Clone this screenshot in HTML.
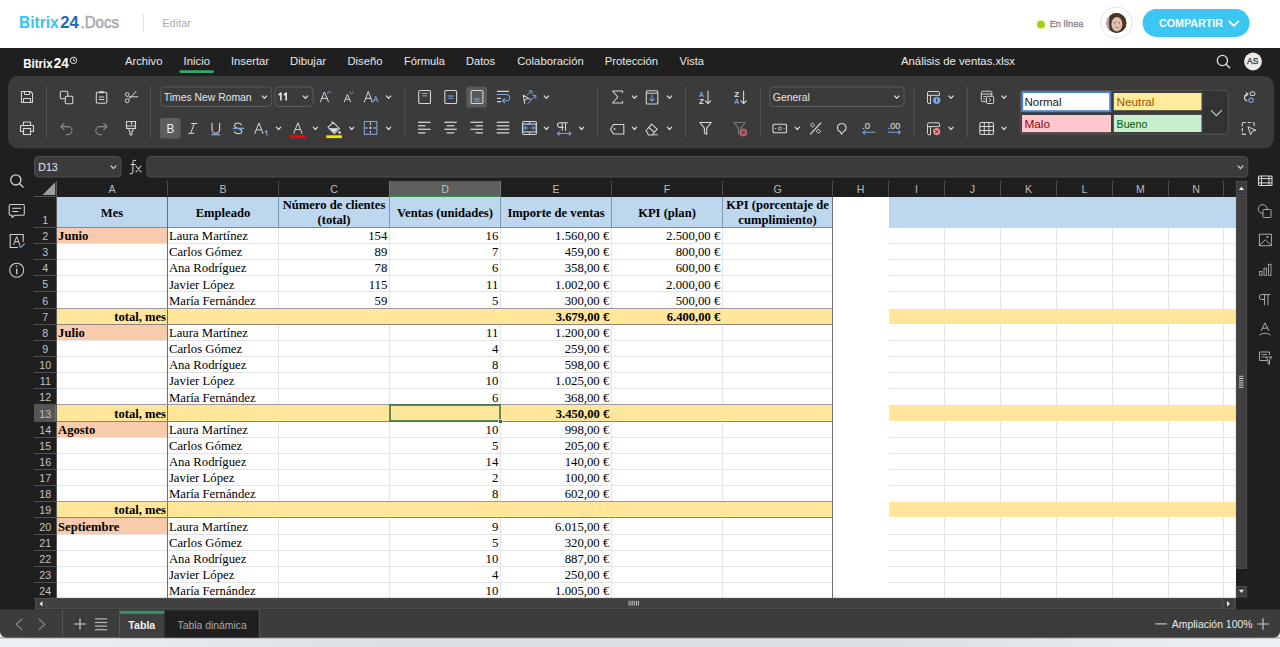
<!DOCTYPE html>
<html><head><meta charset="utf-8"><title>Bitrix24 Docs</title>
<style>html,body{margin:0;padding:0;width:1280px;height:647px;overflow:hidden;background:#1f1f1f;}svg{display:block;}</style>
</head><body>
<svg width="1280" height="647" viewBox="0 0 1280 647" shape-rendering="geometricPrecision">
<rect x="0" y="0" width="1280" height="647" rx="0" fill="#1f1f1f" />
<rect x="0" y="0" width="1280" height="48" rx="0" fill="#ffffff" />
<text x="19.1" y="27.7" font-family="&quot;Liberation Sans&quot;, sans-serif" font-size="17" font-weight="700" fill="#2fc6f6" text-anchor="start" textLength="39.4" lengthAdjust="spacingAndGlyphs" >Bitrix</text>
<text x="60.3" y="27.7" font-family="&quot;Liberation Sans&quot;, sans-serif" font-size="17" font-weight="700" fill="#1a6bb8" text-anchor="start" textLength="18.5" lengthAdjust="spacingAndGlyphs" >24</text>
<text x="80.5" y="27.7" font-family="&quot;Liberation Sans&quot;, sans-serif" font-size="17" font-weight="400" fill="#a3a9b1" text-anchor="start" textLength="38.5" lengthAdjust="spacingAndGlyphs" stroke="#a3a9b1" stroke-width="0.5">.Docs</text>
<line x1="143.5" y1="14" x2="143.5" y2="31.5" stroke="#e3e5e8" stroke-width="1" />
<text x="162.3" y="27.2" font-family="&quot;Liberation Sans&quot;, sans-serif" font-size="10.6" font-weight="400" fill="#a8adb4" text-anchor="start" textLength="28.7" lengthAdjust="spacingAndGlyphs" >Editar</text>
<circle cx="1041" cy="24.5" r="4" fill="#9bd60c"/>
<text x="1049.7" y="27" font-family="&quot;Liberation Sans&quot;, sans-serif" font-size="9.8" font-weight="400" fill="#80858c" text-anchor="start" textLength="33.7" lengthAdjust="spacingAndGlyphs" stroke="#80858c" stroke-width="0.3">En línea</text>
<circle cx="1116.5" cy="22.8" r="15.8" fill="#fff" stroke="#e3e3e3" stroke-width="1"/>
<clipPath id="av"><circle cx="1116.4" cy="23" r="10"/></clipPath>
<g clip-path="url(#av)"><rect x="1105" y="12" width="23" height="22" fill="#5a4238"/><rect x="1105" y="12" width="4.5" height="22" fill="#a9a9a9"/><ellipse cx="1118" cy="22.5" rx="9" ry="11" fill="#4b3428"/><ellipse cx="1116.9" cy="24.2" rx="5.5" ry="7.3" fill="#e0bfac"/><path d="M1111.8 20.5 Q1114 15.5 1119.5 16.5 Q1122 17.5 1122.2 20 L1122.5 17 Q1118 12.5 1111 16.5 Z" fill="#4b3428"/><ellipse cx="1114.8" cy="22.8" rx="1" ry="0.55" fill="#6a4a3e"/><ellipse cx="1119" cy="22.8" rx="1" ry="0.55" fill="#6a4a3e"/><path d="M1115 27.3 Q1117 28.6 1119 27.3" stroke="#b87878" stroke-width="0.9" fill="none"/></g>
<rect x="1142.6" y="9.1" width="107" height="27.8" rx="13.9" fill="#3cc6f3" />
<text x="1159" y="27.1" font-family="&quot;Liberation Sans&quot;, sans-serif" font-size="10.2" font-weight="700" fill="#ffffff" text-anchor="start" textLength="64" lengthAdjust="spacingAndGlyphs" >COMPARTIR</text>
<path d="M1229.3 21.4 L1233.8 25.9 L1238.3 21.4" stroke="#fff" stroke-width="1.9" fill="none" stroke-linecap="round" stroke-linejoin="round"/>
<text x="23.2" y="67.5" font-family="&quot;Liberation Sans&quot;, sans-serif" font-size="13" font-weight="700" fill="#ffffff" text-anchor="start" textLength="29.5" lengthAdjust="spacingAndGlyphs" >Bitrix</text>
<text x="53.8" y="67.5" font-family="&quot;Liberation Sans&quot;, sans-serif" font-size="14" font-weight="700" fill="#ffffff" text-anchor="start" textLength="15" lengthAdjust="spacingAndGlyphs" >24</text>
<circle cx="73.5" cy="60.4" r="3.2" fill="none" stroke="#fff" stroke-width="0.9"/>
<path d="M73.5 58.6 V60.6 H75" stroke="#fff" stroke-width="0.8" fill="none" />
<text x="125" y="65.2" font-family="&quot;Liberation Sans&quot;, sans-serif" font-size="11.3" font-weight="400" fill="#e8e8e8" text-anchor="start" textLength="37.5" lengthAdjust="spacingAndGlyphs" >Archivo</text>
<text x="183.5" y="65.2" font-family="&quot;Liberation Sans&quot;, sans-serif" font-size="11.3" font-weight="400" fill="#e8e8e8" text-anchor="start" textLength="26.5" lengthAdjust="spacingAndGlyphs" >Inicio</text>
<text x="231" y="65.2" font-family="&quot;Liberation Sans&quot;, sans-serif" font-size="11.3" font-weight="400" fill="#e8e8e8" text-anchor="start" textLength="38" lengthAdjust="spacingAndGlyphs" >Insertar</text>
<text x="290" y="65.2" font-family="&quot;Liberation Sans&quot;, sans-serif" font-size="11.3" font-weight="400" fill="#e8e8e8" text-anchor="start" textLength="36" lengthAdjust="spacingAndGlyphs" >Dibujar</text>
<text x="347.5" y="65.2" font-family="&quot;Liberation Sans&quot;, sans-serif" font-size="11.3" font-weight="400" fill="#e8e8e8" text-anchor="start" textLength="35" lengthAdjust="spacingAndGlyphs" >Diseño</text>
<text x="404" y="65.2" font-family="&quot;Liberation Sans&quot;, sans-serif" font-size="11.3" font-weight="400" fill="#e8e8e8" text-anchor="start" textLength="41" lengthAdjust="spacingAndGlyphs" >Fórmula</text>
<text x="466" y="65.2" font-family="&quot;Liberation Sans&quot;, sans-serif" font-size="11.3" font-weight="400" fill="#e8e8e8" text-anchor="start" textLength="29" lengthAdjust="spacingAndGlyphs" >Datos</text>
<text x="517.2" y="65.2" font-family="&quot;Liberation Sans&quot;, sans-serif" font-size="11.3" font-weight="400" fill="#e8e8e8" text-anchor="start" textLength="66.5" lengthAdjust="spacingAndGlyphs" >Colaboración</text>
<text x="604.8" y="65.2" font-family="&quot;Liberation Sans&quot;, sans-serif" font-size="11.3" font-weight="400" fill="#e8e8e8" text-anchor="start" textLength="53.2" lengthAdjust="spacingAndGlyphs" >Protección</text>
<text x="679.5" y="65.2" font-family="&quot;Liberation Sans&quot;, sans-serif" font-size="11.3" font-weight="400" fill="#e8e8e8" text-anchor="start" textLength="24.5" lengthAdjust="spacingAndGlyphs" >Vista</text>
<rect x="179.4" y="70.3" width="34.6" height="2.6" rx="1.3" fill="#3aa46a" />
<text x="901" y="65.2" font-family="&quot;Liberation Sans&quot;, sans-serif" font-size="11.3" font-weight="400" fill="#ececec" text-anchor="start" textLength="114" lengthAdjust="spacingAndGlyphs" >Análisis de ventas.xlsx</text>
<circle cx="1222.4" cy="60.5" r="5.1" fill="none" stroke="#e0e0e0" stroke-width="1.3"/>
<line x1="1226.1" y1="64.2" x2="1229.6" y2="67.7" stroke="#e0e0e0" stroke-width="1.4" stroke-linecap="round"/>
<circle cx="1253" cy="61.5" r="8.9" fill="#ebebeb"/>
<text x="1247" y="64.4" font-family="&quot;Liberation Sans&quot;, sans-serif" font-size="8.6" font-weight="400" fill="#2a2a2a" text-anchor="start" textLength="11.3" lengthAdjust="spacingAndGlyphs" stroke="#2a2a2a" stroke-width="0.25">AS</text>
<rect x="8" y="76" width="1266" height="72.5" rx="10" fill="#3b3b3b" />
<line x1="46.6" y1="86" x2="46.6" y2="138" stroke="#555555" stroke-width="1" />
<line x1="150.5" y1="86" x2="150.5" y2="138" stroke="#555555" stroke-width="1" />
<line x1="404.8" y1="86" x2="404.8" y2="138" stroke="#555555" stroke-width="1" />
<line x1="597.4" y1="86" x2="597.4" y2="138" stroke="#555555" stroke-width="1" />
<line x1="685.5" y1="86" x2="685.5" y2="138" stroke="#555555" stroke-width="1" />
<line x1="760.3" y1="86" x2="760.3" y2="138" stroke="#555555" stroke-width="1" />
<line x1="913.8" y1="86" x2="913.8" y2="138" stroke="#555555" stroke-width="1" />
<line x1="967.3" y1="86" x2="967.3" y2="138" stroke="#555555" stroke-width="1" />
<path d="M21.5 91.5 H30.5 L32.5 93.5 V102.5 H21.5 Z" stroke="#d6d6d6" stroke-width="1.1" fill="none" stroke-linecap="round" stroke-linejoin="round"/>
<path d="M24.5 91.5 V94.5 H29.5 V91.5" stroke="#d6d6d6" stroke-width="1" fill="none" />
<path d="M23.5 102.5 V98.5 H30.5 V102.5" stroke="#d6d6d6" stroke-width="1" fill="none" />
<path d="M23.5 125 V122 H30.5 V125" stroke="#d6d6d6" stroke-width="1.1" fill="none" stroke-linecap="round" stroke-linejoin="round"/>
<path d="M23 131.5 H20.5 V125.5 H33.5 V131.5 H31" stroke="#d6d6d6" stroke-width="1.1" fill="none" stroke-linecap="round" stroke-linejoin="round"/>
<rect x="23.5" y="128.5" width="7" height="6" rx="0" fill="none" stroke="#d6d6d6" stroke-width="1.1" />
<rect x="60.3" y="91.3" width="7.5" height="7.5" rx="1.2" fill="none" stroke="#d6d6d6" stroke-width="1.1" />
<rect x="65.3" y="96.3" width="7.5" height="7.5" rx="1.2" fill="#3b3b3b" stroke="#d6d6d6" stroke-width="1.1" />
<rect x="96.3" y="92.3" width="10.5" height="11" rx="1.5" fill="none" stroke="#d6d6d6" stroke-width="1.1" />
<rect x="99" y="91.2" width="5" height="2" rx="0.8" fill="#d6d6d6" />
<line x1="98.8" y1="97" x2="104.2" y2="97" stroke="#d6d6d6" stroke-width="1" />
<line x1="98.8" y1="99.5" x2="104.2" y2="99.5" stroke="#d6d6d6" stroke-width="1" />
<circle cx="127.2" cy="94.5" r="1.9" fill="none" stroke="#d6d6d6" stroke-width="1"/>
<circle cx="127.2" cy="100.8" r="1.9" fill="none" stroke="#d6d6d6" stroke-width="1"/>
<path d="M128.8 99.3 L136.2 91.2 M129 96.8 H137.8" stroke="#d6d6d6" stroke-width="1" fill="none" stroke-linecap="round" stroke-linejoin="round"/>
<path d="M64 123.5 L60.8 126.6 L64 129.7 M61 126.6 H68 A4 4 0 0 1 68 134.6 H66.5" stroke="#8c8c8c" stroke-width="1.1" fill="none" stroke-linecap="round" stroke-linejoin="round"/>
<path d="M103.8 123.5 L107 126.6 L103.8 129.7 M106.8 126.6 H99.8 A4 4 0 0 0 99.8 134.6 H101.3" stroke="#8c8c8c" stroke-width="1.1" fill="none" stroke-linecap="round" stroke-linejoin="round"/>
<path d="M126.5 121.5 H135.5 V128.5 H126.5 Z" stroke="#d6d6d6" stroke-width="1.1" fill="none" />
<line x1="126.5" y1="126" x2="135.5" y2="126" stroke="#d6d6d6" stroke-width="1" />
<path d="M129 128.5 V131 H130 V135 H132 V131 H133 V128.5" stroke="#d6d6d6" stroke-width="1" fill="none" />
<rect x="131" y="121.5" width="1.2" height="3" rx="0" fill="#d6d6d6" />
<rect x="160.7" y="86.9" width="111" height="19.6" rx="4" fill="none" stroke="#5b5b5b" stroke-width="1" />
<text x="163.8" y="100.5" font-family="&quot;Liberation Sans&quot;, sans-serif" font-size="10.4" font-weight="400" fill="#e6e6e6" text-anchor="start" textLength="87.8" lengthAdjust="spacingAndGlyphs" >Times New Roman</text>
<path d="M262.35 96.0 L264.5 98.4 L266.65 96.0" stroke="#d4d4d4" stroke-width="1.25" fill="none" stroke-linecap="round" stroke-linejoin="round"/>
<rect x="275" y="86.9" width="38" height="19.6" rx="4" fill="none" stroke="#5b5b5b" stroke-width="1" />
<path d="M278.6 95.2 L280.9 93.1 V100.6 M283.9 95.2 L286.2 93.1 V100.6" stroke="#e6e6e6" stroke-width="1.6" fill="none" stroke-linejoin="round"/>
<path d="M303.25 96.0 L305.4 98.4 L307.54999999999995 96.0" stroke="#d4d4d4" stroke-width="1.25" fill="none" stroke-linecap="round" stroke-linejoin="round"/>
<path d="M320.3 101.8 L324.4 92 L328.5 101.8 M321.735 98.37 H327.065" stroke="#d6d6d6" stroke-width="1" fill="none" stroke-linecap="round" stroke-linejoin="round"/>
<path d="M327.3 93.2 L329.1 91.5 L330.9 93.2" stroke="#7ba3dc" stroke-width="1" fill="none" stroke-linecap="round" stroke-linejoin="round"/>
<path d="M344.3 101.8 L347.45000000000005 94.5 L350.6 101.8 M345.40250000000003 99.245 H349.49750000000006" stroke="#d6d6d6" stroke-width="1" fill="none" stroke-linecap="round" stroke-linejoin="round"/>
<path d="M349.6 92 L351.5 93.8 L353.4 92" stroke="#7ba3dc" stroke-width="1" fill="none" stroke-linecap="round" stroke-linejoin="round"/>
<path d="M364.3 102 L368.25 91.5 L372.2 102 M365.6825 98.325 H370.8175" stroke="#d6d6d6" stroke-width="1" fill="none" stroke-linecap="round" stroke-linejoin="round"/>
<path d="M373.4 102 L375.7 96.2 L378 102 M374.2 100 H377.2" stroke="#7ba3dc" stroke-width="1" fill="none" stroke-linecap="round" stroke-linejoin="round"/>
<path d="M386.45000000000005 96.0 L388.6 98.4 L390.75 96.0" stroke="#d4d4d4" stroke-width="1.25" fill="none" stroke-linecap="round" stroke-linejoin="round"/>
<rect x="160" y="118" width="20.7" height="20.6" rx="2.5" fill="#5e5e5e" />
<text x="166.6" y="133.3" font-family="&quot;Liberation Sans&quot;, sans-serif" font-size="13.2" font-weight="400" fill="#f0f0f0" text-anchor="start" textLength="7.8" lengthAdjust="spacingAndGlyphs" >B</text>
<path d="M191.5 123.5 H197 M194.2 123.5 L190.8 133.3 M188.6 133.3 H194" stroke="#d6d6d6" stroke-width="1" fill="none" stroke-linecap="round" stroke-linejoin="round"/>
<path d="M212 123.2 V129.5 A3.8 3.8 0 0 0 219.6 129.5 V123.2" stroke="#d6d6d6" stroke-width="1.1" fill="none" stroke-linecap="round" stroke-linejoin="round"/>
<line x1="211.2" y1="134.6" x2="220.2" y2="134.6" stroke="#7ba3dc" stroke-width="1.5" />
<path d="M241.3 124.8 C240.5 123.5 239.3 123 238 123 C235.8 123 234.6 124.2 234.6 125.7 C234.6 129 241.8 128 241.8 131.3 C241.8 132.8 240.3 133.8 238.2 133.8 C236.6 133.8 235.2 133.2 234.3 131.9" stroke="#d6d6d6" stroke-width="1.1" fill="none" stroke-linecap="round" stroke-linejoin="round"/>
<line x1="232.8" y1="128.4" x2="244" y2="128.4" stroke="#7ba3dc" stroke-width="1.4" />
<path d="M254.8 133.5 L258.9 123 L263 133.5 M256.235 129.825 H261.565" stroke="#d6d6d6" stroke-width="1" fill="none" stroke-linecap="round" stroke-linejoin="round"/>
<path d="M265.2 132 L266.8 130.6 V135.2" stroke="#7ba3dc" stroke-width="1.1" fill="none" stroke-linecap="round" stroke-linejoin="round"/>
<path d="M276.45000000000005 127.10000000000001 L278.6 129.5 L280.75 127.10000000000001" stroke="#d4d4d4" stroke-width="1.25" fill="none" stroke-linecap="round" stroke-linejoin="round"/>
<path d="M293.8 133.2 L297.9 122.8 L302 133.2 M295.235 129.56 H300.565" stroke="#d6d6d6" stroke-width="1" fill="none" stroke-linecap="round" stroke-linejoin="round"/>
<rect x="290" y="135.3" width="15.7" height="2.8" rx="0" fill="#ff0000" />
<path d="M313.25 127.10000000000001 L315.4 129.5 L317.54999999999995 127.10000000000001" stroke="#d4d4d4" stroke-width="1.25" fill="none" stroke-linecap="round" stroke-linejoin="round"/>
<path d="M328 127.3 L333.2 122.3 L339.5 128.6 L334.3 133.6 Z" stroke="#d6d6d6" stroke-width="1.1" fill="none" stroke-linecap="round" stroke-linejoin="round"/>
<path d="M329 128.3 H338.5 L334.3 132.6 Z" stroke="none" stroke-width="1" fill="#e8e8e8" />
<line x1="331.2" y1="121.2" x2="333.3" y2="123.3" stroke="#d6d6d6" stroke-width="1" />
<circle cx="339.6" cy="132.6" r="1.3" fill="#d6d6d6"/>
<rect x="326.3" y="135.3" width="15.7" height="2.8" rx="0" fill="#f5e600" />
<path d="M349.55 127.10000000000001 L351.7 129.5 L353.84999999999997 127.10000000000001" stroke="#d4d4d4" stroke-width="1.25" fill="none" stroke-linecap="round" stroke-linejoin="round"/>
<rect x="364.3" y="121.5" width="12.5" height="12.8" rx="0" fill="none" stroke="#7ba3dc" stroke-width="1.1" />
<path d="M370.5 122.3 V134 M365 128 H376" stroke="#d0d0d0" stroke-width="1.1" fill="none" stroke-dasharray="2.6 1.6"/>
<path d="M386.45000000000005 127.10000000000001 L388.6 129.5 L390.75 127.10000000000001" stroke="#d4d4d4" stroke-width="1.25" fill="none" stroke-linecap="round" stroke-linejoin="round"/>
<rect x="418.7" y="90.5" width="11.8" height="13" rx="1.3" fill="none" stroke="#d6d6d6" stroke-width="1.1" />
<line x1="421.4" y1="93.5" x2="427.79999999999995" y2="93.5" stroke="#7ba3dc" stroke-width="1.1" />
<line x1="422.29999999999995" y1="95.8" x2="426.9" y2="95.8" stroke="#7ba3dc" stroke-width="1.1" />
<rect x="444.8" y="90.5" width="11.8" height="13" rx="1.3" fill="none" stroke="#d6d6d6" stroke-width="1.1" />
<line x1="447.5" y1="96" x2="453.9" y2="96" stroke="#7ba3dc" stroke-width="1.1" />
<line x1="448.4" y1="98.3" x2="453.0" y2="98.3" stroke="#7ba3dc" stroke-width="1.1" />
<rect x="466.2" y="86.4" width="20.8" height="21.1" rx="3" fill="#5a5a5a" />
<rect x="471.1" y="90.5" width="11.8" height="13" rx="1.3" fill="none" stroke="#d6d6d6" stroke-width="1.1" />
<line x1="473.8" y1="99" x2="480.2" y2="99" stroke="#7ba3dc" stroke-width="1.1" />
<line x1="474.7" y1="101.3" x2="479.3" y2="101.3" stroke="#7ba3dc" stroke-width="1.1" />
<path d="M497 91.4 H509 M497 98.3 H501 M497 101.6 H501" stroke="#d6d6d6" stroke-width="1.2" fill="none" />
<path d="M497 94.5 H506.5 A3.15 3.15 0 0 1 506.5 100.8 H502.8" stroke="#7ba3dc" stroke-width="1.1" fill="none" stroke-linecap="round" stroke-linejoin="round"/>
<path d="M504.6 99 L502.6 100.8 L504.6 102.6" stroke="#7ba3dc" stroke-width="1.2" fill="none" stroke-linecap="round" stroke-linejoin="round"/>
<g transform="rotate(-35 525.5 98.5)"><path d="M522 102 L525.5 94.5 L529 102 M523.3 99.5 H527.7" stroke="#d6d6d6" stroke-width="1" fill="none" stroke-linecap="round" stroke-linejoin="round"/></g>
<path d="M527.8 103.6 L535.6 95.6 M532.6 95.3 H535.8 V98.5 M527.3 94.8 L531.6 91 M529.2 90.9 H531.8 V93.5" stroke="#7ba3dc" stroke-width="1" fill="none" stroke-linecap="round" stroke-linejoin="round"/>
<path d="M544.25 96.0 L546.4 98.4 L548.55 96.0" stroke="#d4d4d4" stroke-width="1.25" fill="none" stroke-linecap="round" stroke-linejoin="round"/>
<line x1="418" y1="122.3" x2="430.5" y2="122.3" stroke="#d0d0d0" stroke-width="1.3" />
<line x1="418" y1="125.8" x2="425.5" y2="125.8" stroke="#d0d0d0" stroke-width="1.3" />
<line x1="418" y1="129.3" x2="430.5" y2="129.3" stroke="#d0d0d0" stroke-width="1.3" />
<line x1="418" y1="132.9" x2="425.5" y2="132.9" stroke="#d0d0d0" stroke-width="1.3" />
<line x1="444.3" y1="122.3" x2="456.8" y2="122.3" stroke="#d0d0d0" stroke-width="1.3" />
<line x1="446.8" y1="125.8" x2="454.3" y2="125.8" stroke="#d0d0d0" stroke-width="1.3" />
<line x1="444.3" y1="129.3" x2="456.8" y2="129.3" stroke="#d0d0d0" stroke-width="1.3" />
<line x1="446.8" y1="132.9" x2="454.3" y2="132.9" stroke="#d0d0d0" stroke-width="1.3" />
<line x1="470.5" y1="122.3" x2="483.0" y2="122.3" stroke="#d0d0d0" stroke-width="1.3" />
<line x1="475.5" y1="125.8" x2="483.0" y2="125.8" stroke="#d0d0d0" stroke-width="1.3" />
<line x1="470.5" y1="129.3" x2="483.0" y2="129.3" stroke="#d0d0d0" stroke-width="1.3" />
<line x1="475.5" y1="132.9" x2="483.0" y2="132.9" stroke="#d0d0d0" stroke-width="1.3" />
<line x1="496.7" y1="122.3" x2="509.2" y2="122.3" stroke="#d0d0d0" stroke-width="1.3" />
<line x1="496.7" y1="125.8" x2="509.2" y2="125.8" stroke="#d0d0d0" stroke-width="1.3" />
<line x1="496.7" y1="129.3" x2="509.2" y2="129.3" stroke="#d0d0d0" stroke-width="1.3" />
<line x1="496.7" y1="132.9" x2="509.2" y2="132.9" stroke="#d0d0d0" stroke-width="1.3" />
<rect x="522.5" y="121.5" width="14" height="13" rx="1.5" fill="none" stroke="#d6d6d6" stroke-width="1.1" />
<line x1="522.5" y1="124" x2="536.5" y2="124" stroke="#d6d6d6" stroke-width="1" />
<line x1="522.5" y1="132" x2="536.5" y2="132" stroke="#d6d6d6" stroke-width="1" />
<line x1="529.5" y1="121.5" x2="529.5" y2="124" stroke="#d6d6d6" stroke-width="1" />
<line x1="529.5" y1="132" x2="529.5" y2="134.5" stroke="#d6d6d6" stroke-width="1" />
<rect x="523.2" y="124.6" width="12.6" height="7" rx="0" fill="none" stroke="#7ba3dc" stroke-width="0.9" />
<path d="M524.5 128 H528 M526 126.5 L524.5 128 L526 129.5 M534.5 128 H531 M533 126.5 L534.5 128 L533 129.5" stroke="#7ba3dc" stroke-width="1" fill="none" stroke-linecap="round" stroke-linejoin="round"/>
<path d="M544.25 127.10000000000001 L546.4 129.5 L548.55 127.10000000000001" stroke="#d4d4d4" stroke-width="1.25" fill="none" stroke-linecap="round" stroke-linejoin="round"/>
<path d="M563.2 122.8 H559.8 A2.3 2.3 0 0 0 559.8 127.4 H563.2 M562.2 122.8 V130.2 M565.5 122.8 V130.2 M561 122.8 H567.5" stroke="#d6d6d6" stroke-width="1.1" fill="none" stroke-linecap="round" stroke-linejoin="round"/>
<path d="M557.5 133.5 H571 M559.2 131.8 L557.5 133.5 L559.2 135.2 M569.3 131.8 L571 133.5 L569.3 135.2" stroke="#7ba3dc" stroke-width="1.1" fill="none" stroke-linecap="round" stroke-linejoin="round"/>
<path d="M579.45 127.10000000000001 L581.6 129.5 L583.75 127.10000000000001" stroke="#d4d4d4" stroke-width="1.25" fill="none" stroke-linecap="round" stroke-linejoin="round"/>
<path d="M622.6 92.5 V91 H612.5 L617.8 97 L612.5 103 H622.6 V101.5" stroke="#d6d6d6" stroke-width="1.1" fill="none" stroke-linecap="round" stroke-linejoin="round"/>
<path d="M632.35 96.0 L634.5 98.4 L636.65 96.0" stroke="#d4d4d4" stroke-width="1.25" fill="none" stroke-linecap="round" stroke-linejoin="round"/>
<rect x="646.3" y="90.8" width="11.5" height="13.2" rx="1" fill="none" stroke="#d6d6d6" stroke-width="1.1" />
<line x1="646.3" y1="93.2" x2="657.8" y2="93.2" stroke="#d6d6d6" stroke-width="1" />
<path d="M652 95 V101 M649.6 98.8 L652 101.2 L654.4 98.8" stroke="#7ba3dc" stroke-width="1.1" fill="none" stroke-linecap="round" stroke-linejoin="round"/>
<path d="M667.35 96.0 L669.5 98.4 L671.65 96.0" stroke="#d4d4d4" stroke-width="1.25" fill="none" stroke-linecap="round" stroke-linejoin="round"/>
<path d="M613.5 124.5 H623.8 V134 H613.5 L610.5 129.25 Z" stroke="#d6d6d6" stroke-width="1.1" fill="none" stroke-linecap="round" stroke-linejoin="round"/>
<circle cx="614.5" cy="129" r="0.9" fill="#d6d6d6"/>
<path d="M632.35 127.10000000000001 L634.5 129.5 L636.65 127.10000000000001" stroke="#d4d4d4" stroke-width="1.25" fill="none" stroke-linecap="round" stroke-linejoin="round"/>
<path d="M646 130.5 L651.6 124.2 L657.2 129.2 L652 135 H648.5 Z M649 127.5 L654.2 132.2" stroke="#d6d6d6" stroke-width="1.1" fill="none" stroke-linecap="round" stroke-linejoin="round"/>
<line x1="652" y1="134.8" x2="657.8" y2="134.8" stroke="#d6d6d6" stroke-width="1" />
<path d="M667.35 127.10000000000001 L669.5 129.5 L671.65 127.10000000000001" stroke="#d4d4d4" stroke-width="1.25" fill="none" stroke-linecap="round" stroke-linejoin="round"/>
<text x="699" y="96.5" font-family="&quot;Liberation Sans&quot;, sans-serif" font-size="6.6" font-weight="700" fill="#7ba3dc" text-anchor="start" textLength="5" lengthAdjust="spacingAndGlyphs" >A</text>
<text x="699" y="104" font-family="&quot;Liberation Sans&quot;, sans-serif" font-size="6.6" font-weight="700" fill="#e0e0e0" text-anchor="start" textLength="5" lengthAdjust="spacingAndGlyphs" >Z</text>
<path d="M708 91 V103.5 M705.3 100.8 L708 103.5 L710.7 100.8" stroke="#d6d6d6" stroke-width="1.1" fill="none" stroke-linecap="round" stroke-linejoin="round"/>
<text x="734.2" y="96.5" font-family="&quot;Liberation Sans&quot;, sans-serif" font-size="6.6" font-weight="700" fill="#e0e0e0" text-anchor="start" textLength="5" lengthAdjust="spacingAndGlyphs" >Z</text>
<text x="734.2" y="104" font-family="&quot;Liberation Sans&quot;, sans-serif" font-size="6.6" font-weight="700" fill="#7ba3dc" text-anchor="start" textLength="5" lengthAdjust="spacingAndGlyphs" >A</text>
<path d="M743.6 91 V103.5 M740.9 100.8 L743.6 103.5 L746.3 100.8" stroke="#d6d6d6" stroke-width="1.1" fill="none" stroke-linecap="round" stroke-linejoin="round"/>
<path d="M699.8 122.5 H711.3 L706.7 128.2 V134.2 L704.4 133 V128.2 Z" stroke="#d6d6d6" stroke-width="1.1" fill="none" stroke-linecap="round" stroke-linejoin="round"/>
<path d="M733.8 122.5 H745.3 L740.7 128.2 V134.2 L738.4 133 V128.2 Z" stroke="#7a7a7a" stroke-width="1.1" fill="none" stroke-linecap="round" stroke-linejoin="round"/>
<circle cx="743.3" cy="132.5" r="4" fill="#a8606a"/>
<path d="M741.9 131.1 L744.7 133.9 M744.7 131.1 L741.9 133.9" stroke="#5a2228" stroke-width="1" fill="none" />
<rect x="769.8" y="86.9" width="134.3" height="19.6" rx="4" fill="none" stroke="#5b5b5b" stroke-width="1" />
<text x="772.8" y="100.5" font-family="&quot;Liberation Sans&quot;, sans-serif" font-size="10.4" font-weight="400" fill="#e6e6e6" text-anchor="start" textLength="37" lengthAdjust="spacingAndGlyphs" >General</text>
<path d="M894.65 96.0 L896.8 98.4 L898.9499999999999 96.0" stroke="#d4d4d4" stroke-width="1.25" fill="none" stroke-linecap="round" stroke-linejoin="round"/>
<rect x="773" y="124.3" width="13.5" height="8.5" rx="1" fill="none" stroke="#d6d6d6" stroke-width="1.1" />
<circle cx="779.8" cy="128.5" r="1.5" fill="none" stroke="#d6d6d6" stroke-width="0.9"/>
<circle cx="775.6" cy="128.5" r="0.6" fill="#d6d6d6"/><circle cx="784" cy="128.5" r="0.6" fill="#d6d6d6"/>
<path d="M795.15 127.10000000000001 L797.3 129.5 L799.4499999999999 127.10000000000001" stroke="#d4d4d4" stroke-width="1.25" fill="none" stroke-linecap="round" stroke-linejoin="round"/>
<path d="M810.5 134 L820.8 123" stroke="#d6d6d6" stroke-width="1.1" fill="none" stroke-linecap="round" stroke-linejoin="round"/>
<path d="M812.6 123.2 L814.6 125.2 L812.6 127.2 L810.6 125.2 Z M818.6 129.4 L820.6 131.4 L818.6 133.4 L816.6 131.4 Z" stroke="#d6d6d6" stroke-width="1" fill="none" stroke-linecap="round" stroke-linejoin="round"/>
<path d="M841.5 134.3 L840.3 131.8 A4.3 4.3 0 1 1 843.2 131.8 Z" stroke="#d6d6d6" stroke-width="1.1" fill="none" stroke-linecap="round" stroke-linejoin="round"/>
<text x="862" y="129" font-family="&quot;Liberation Sans&quot;, sans-serif" font-size="8.2" font-weight="400" fill="#e0e0e0" text-anchor="start" textLength="8" lengthAdjust="spacingAndGlyphs" >.0</text>
<path d="M863 132.3 H875 M864.7 130.6 L863 132.3 L864.7 134" stroke="#7ba3dc" stroke-width="1.1" fill="none" stroke-linecap="round" stroke-linejoin="round"/>
<text x="887.8" y="129" font-family="&quot;Liberation Sans&quot;, sans-serif" font-size="8.2" font-weight="400" fill="#e0e0e0" text-anchor="start" textLength="12.5" lengthAdjust="spacingAndGlyphs" >.00</text>
<path d="M888 132.3 H900.3 M898.6 130.6 L900.3 132.3 L898.6 134" stroke="#7ba3dc" stroke-width="1.1" fill="none" stroke-linecap="round" stroke-linejoin="round"/>
<path d="M929 91.5 H938 A1.5 1.5 0 0 1 939.5 93 V95.3 H930.5 V103.5 H929 A1.5 1.5 0 0 1 927.5 102 V93 A1.5 1.5 0 0 1 929 91.5 Z" stroke="#d6d6d6" stroke-width="1" fill="none" />
<line x1="927.5" y1="95.3" x2="931" y2="95.3" stroke="#d6d6d6" stroke-width="1" />
<circle cx="936.7" cy="100.3" r="3.6" fill="#78a7e8"/>
<line x1="936.7" y1="98.3" x2="936.7" y2="102.3" stroke="#1f3f6f" stroke-width="1.1" />
<path d="M929 122.8 H938 A1.5 1.5 0 0 1 939.5 124.3 V126.6 H930.5 V134.8 H929 A1.5 1.5 0 0 1 927.5 133.3 V124.3 A1.5 1.5 0 0 1 929 122.8 Z" stroke="#d6d6d6" stroke-width="1" fill="none" />
<line x1="927.5" y1="126.6" x2="931" y2="126.6" stroke="#d6d6d6" stroke-width="1" />
<circle cx="936.7" cy="131.6" r="3.6" fill="#f08a90"/>
<path d="M935.2 130.1 L938.2 133.1 M938.2 130.1 L935.2 133.1" stroke="#5a2020" stroke-width="1" fill="none" />
<path d="M948.85 96.0 L951 98.4 L953.15 96.0" stroke="#d4d4d4" stroke-width="1.25" fill="none" stroke-linecap="round" stroke-linejoin="round"/>
<path d="M948.85 127.10000000000001 L951 129.5 L953.15 127.10000000000001" stroke="#d4d4d4" stroke-width="1.25" fill="none" stroke-linecap="round" stroke-linejoin="round"/>
<rect x="981.3" y="91.2" width="10.5" height="10.5" rx="1.5" fill="none" stroke="#d6d6d6" stroke-width="1" />
<line x1="981.3" y1="94" x2="991.8" y2="94" stroke="#d6d6d6" stroke-width="1" />
<line x1="983.3" y1="96.5" x2="986.5" y2="96.5" stroke="#d6d6d6" stroke-width="0.9" />
<line x1="983.3" y1="99" x2="985.5" y2="99" stroke="#d6d6d6" stroke-width="0.9" />
<rect x="986.5" y="96.3" width="7.2" height="7.2" rx="1" fill="#3b3b3b" stroke="#d6d6d6" stroke-width="1" />
<path d="M988.8 98.2 L991 99.9 L988.8 101.6" stroke="#d6d6d6" stroke-width="0.9" fill="none" />
<path d="M1001.95 96.0 L1004.1 98.4 L1006.25 96.0" stroke="#d4d4d4" stroke-width="1.25" fill="none" stroke-linecap="round" stroke-linejoin="round"/>
<rect x="979.8" y="122.5" width="13.7" height="12" rx="1.5" fill="none" stroke="#d6d6d6" stroke-width="1.1" />
<path d="M979.8 126.5 H993.5 M979.8 130.5 H993.5 M984.3 122.5 V134.5 M988.9 122.5 V134.5" stroke="#d6d6d6" stroke-width="1" fill="none" />
<path d="M1001.95 127.10000000000001 L1004.1 129.5 L1006.25 127.10000000000001" stroke="#d4d4d4" stroke-width="1.25" fill="none" stroke-linecap="round" stroke-linejoin="round"/>
<rect x="1020.3" y="90.6" width="208" height="43.5" rx="3" fill="none" stroke="#555" stroke-width="1" />
<rect x="1203.4" y="90.6" width="25" height="43.5" rx="0" fill="#333333" />
<path d="M1221.4 90.6 H1225.3 A3 3 0 0 1 1228.3 93.6 V131.1 A3 3 0 0 1 1225.3 134.1 H1203.4" stroke="#555" stroke-width="1" fill="none" />
<rect x="1022.2" y="92.1" width="88" height="19.1" rx="0" fill="#ffffff" stroke="#4a82d8" stroke-width="2" />
<text x="1024.5" y="105.8" font-family="&quot;Liberation Sans&quot;, sans-serif" font-size="11" font-weight="400" fill="#1a1a1a" text-anchor="start" textLength="37" lengthAdjust="spacingAndGlyphs" >Normal</text>
<rect x="1113.8" y="93" width="87.7" height="17.2" rx="0" fill="#ffeb9c" />
<text x="1116.5" y="105.8" font-family="&quot;Liberation Sans&quot;, sans-serif" font-size="11" font-weight="400" fill="#9c5700" text-anchor="start" textLength="38" lengthAdjust="spacingAndGlyphs" >Neutral</text>
<rect x="1022" y="115" width="89" height="17.2" rx="0" fill="#ffc7ce" />
<text x="1024.5" y="127.5" font-family="&quot;Liberation Sans&quot;, sans-serif" font-size="11" font-weight="400" fill="#9c0006" text-anchor="start" textLength="25.5" lengthAdjust="spacingAndGlyphs" >Malo</text>
<rect x="1113.8" y="114.9" width="87.7" height="17.1" rx="0" fill="#c6efce" />
<text x="1116.5" y="127.5" font-family="&quot;Liberation Sans&quot;, sans-serif" font-size="11" font-weight="400" fill="#006100" text-anchor="start" textLength="31" lengthAdjust="spacingAndGlyphs" >Bueno</text>
<path d="M1211.4 110.7 L1216.4 115.7 L1221.4 110.7" stroke="#d0d0d0" stroke-width="1.2" fill="none" stroke-linecap="round" stroke-linejoin="round"/>
<path d="M1247.3 94.2 A3.5 3.5 0 0 0 1246.8 100.9" stroke="#d6d6d6" stroke-width="1.2" fill="none" stroke-linecap="round" stroke-linejoin="round"/>
<path d="M1246.2 92.6 L1248 94.2 L1246.2 95.8" stroke="#d6d6d6" stroke-width="1.1" fill="none" stroke-linecap="round" stroke-linejoin="round"/>
<rect x="1250.2" y="92" width="4.6" height="3.4" rx="0.6" fill="none" stroke="#d6d6d6" stroke-width="1" />
<circle cx="1251.1" cy="100.3" r="2.2" fill="none" stroke="#7ba3dc" stroke-width="1.1"/>
<path d="M1245.5 122.5 H1243.5 A1.3 1.3 0 0 0 1242.3 123.8 V126 M1242.3 128.5 V131 M1242.3 133.2 A1.3 1.3 0 0 0 1243.5 134.4 H1245.5 M1248 122.5 H1250.5 M1253 122.5 A1.3 1.3 0 0 1 1254.2 123.8 V125.5" stroke="#d6d6d6" stroke-width="1.1" fill="none" stroke-linecap="round" stroke-linejoin="round"/>
<path d="M1248.3 126.8 L1256 130.3 L1252.4 131.2 L1250.8 134.5 Z" stroke="#d6d6d6" stroke-width="1" fill="none" stroke-linecap="round" stroke-linejoin="round"/>
<rect x="34.5" y="156.5" width="86.5" height="20.5" rx="4" fill="#3b3b3b" stroke="#4e4e4e" stroke-width="1" />
<text x="38.3" y="170.6" font-family="&quot;Liberation Sans&quot;, sans-serif" font-size="10" font-weight="400" fill="#e8e8e8" text-anchor="start" textLength="19.4" lengthAdjust="spacingAndGlyphs" >D13</text>
<path d="M111.0 165.9 L113.5 168.70000000000002 L116.0 165.9" stroke="#d4d4d4" stroke-width="1.25" fill="none" stroke-linecap="round" stroke-linejoin="round"/>
<path d="M135.6 160.6 Q133 159.2 132.9 162.5 V171.5 Q132.8 174.3 130.2 173.6 M131 164.5 H135.3" stroke="#cfcfcf" stroke-width="1.1" fill="none" stroke-linecap="round" stroke-linejoin="round"/>
<path d="M136 166 L141 172 M141 166 L136 172" stroke="#cfcfcf" stroke-width="1.1" fill="none" stroke-linecap="round" stroke-linejoin="round"/>
<rect x="146.8" y="156.5" width="1101" height="20.5" rx="4" fill="#3b3b3b" stroke="#4e4e4e" stroke-width="1" />
<path d="M1238.0 165.9 L1240.5 168.70000000000002 L1243.0 165.9" stroke="#d4d4d4" stroke-width="1.25" fill="none" stroke-linecap="round" stroke-linejoin="round"/>
<circle cx="15.8" cy="179.9" r="5.1" fill="none" stroke="#cfcfcf" stroke-width="1.3"/>
<line x1="19.4" y1="183.5" x2="23" y2="187" stroke="#cfcfcf" stroke-width="1.4" stroke-linecap="round" stroke-linejoin="round"/>
<path d="M10.5 204.5 H23 A1.3 1.3 0 0 1 24.3 205.8 V214 A1.3 1.3 0 0 1 23 215.3 H14.5 L12 217.5 V215.3 H10.5 A1.3 1.3 0 0 1 9.2 214 V205.8 A1.3 1.3 0 0 1 10.5 204.5 Z" stroke="#cfcfcf" stroke-width="1.1" fill="none" stroke-linecap="round" stroke-linejoin="round"/>
<line x1="12.2" y1="208.3" x2="21.2" y2="208.3" stroke="#cfcfcf" stroke-width="1.1" />
<line x1="12.2" y1="211.5" x2="18.5" y2="211.5" stroke="#cfcfcf" stroke-width="1.1" />
<path d="M17.5 247.5 H10.2 V234.5 H23.2 V241.5" stroke="#cfcfcf" stroke-width="1.1" fill="none" stroke-linecap="round" stroke-linejoin="round"/>
<path d="M13.6 244.6 L16.7 236.6 L19.8 244.6 M14.7 241.8 H18.7" stroke="#cfcfcf" stroke-width="1" fill="none" stroke-linecap="round" stroke-linejoin="round"/>
<path d="M19 245.6 L20.8 247.4 L24.5 243.6" stroke="#7ba3dc" stroke-width="1.2" fill="none" stroke-linecap="round" stroke-linejoin="round"/>
<circle cx="16.7" cy="270.2" r="7" fill="none" stroke="#cfcfcf" stroke-width="1.1"/>
<line x1="16.7" y1="268.5" x2="16.7" y2="274.2" stroke="#cfcfcf" stroke-width="1.3" />
<circle cx="16.7" cy="266.3" r="0.8" fill="#cfcfcf"/>
<rect x="34" y="180" width="1202" height="16" rx="0" fill="#1f1f1f" />
<rect x="389" y="181" width="112" height="15" rx="0" fill="#5e5e5e" />
<line x1="56.5" y1="181" x2="56.5" y2="196" stroke="#4a4a4a" stroke-width="1" />
<text x="112.0" y="192.8" font-family="&quot;Liberation Sans&quot;, sans-serif" font-size="10.6" font-weight="400" fill="#bdbdbd" text-anchor="middle" >A</text>
<line x1="167.5" y1="181" x2="167.5" y2="196" stroke="#4a4a4a" stroke-width="1" />
<text x="223.0" y="192.8" font-family="&quot;Liberation Sans&quot;, sans-serif" font-size="10.6" font-weight="400" fill="#bdbdbd" text-anchor="middle" >B</text>
<line x1="278.5" y1="181" x2="278.5" y2="196" stroke="#4a4a4a" stroke-width="1" />
<text x="334.0" y="192.8" font-family="&quot;Liberation Sans&quot;, sans-serif" font-size="10.6" font-weight="400" fill="#bdbdbd" text-anchor="middle" >C</text>
<line x1="389.5" y1="181" x2="389.5" y2="196" stroke="#777777" stroke-width="1" />
<text x="445.0" y="192.8" font-family="&quot;Liberation Sans&quot;, sans-serif" font-size="10.6" font-weight="400" fill="#bdbdbd" text-anchor="middle" >D</text>
<line x1="500.5" y1="181" x2="500.5" y2="196" stroke="#777777" stroke-width="1" />
<text x="556.0" y="192.8" font-family="&quot;Liberation Sans&quot;, sans-serif" font-size="10.6" font-weight="400" fill="#bdbdbd" text-anchor="middle" >E</text>
<line x1="611.5" y1="181" x2="611.5" y2="196" stroke="#4a4a4a" stroke-width="1" />
<text x="667.0" y="192.8" font-family="&quot;Liberation Sans&quot;, sans-serif" font-size="10.6" font-weight="400" fill="#bdbdbd" text-anchor="middle" >F</text>
<line x1="722.5" y1="181" x2="722.5" y2="196" stroke="#4a4a4a" stroke-width="1" />
<text x="777.5" y="192.8" font-family="&quot;Liberation Sans&quot;, sans-serif" font-size="10.6" font-weight="400" fill="#bdbdbd" text-anchor="middle" >G</text>
<line x1="832.5" y1="181" x2="832.5" y2="196" stroke="#4a4a4a" stroke-width="1" />
<text x="860.5" y="192.8" font-family="&quot;Liberation Sans&quot;, sans-serif" font-size="10.6" font-weight="400" fill="#bdbdbd" text-anchor="middle" >H</text>
<line x1="888.5" y1="181" x2="888.5" y2="196" stroke="#4a4a4a" stroke-width="1" />
<text x="916.5" y="192.8" font-family="&quot;Liberation Sans&quot;, sans-serif" font-size="10.6" font-weight="400" fill="#bdbdbd" text-anchor="middle" >I</text>
<line x1="944.5" y1="181" x2="944.5" y2="196" stroke="#4a4a4a" stroke-width="1" />
<text x="972.5" y="192.8" font-family="&quot;Liberation Sans&quot;, sans-serif" font-size="10.6" font-weight="400" fill="#bdbdbd" text-anchor="middle" >J</text>
<line x1="1000.5" y1="181" x2="1000.5" y2="196" stroke="#4a4a4a" stroke-width="1" />
<text x="1028.5" y="192.8" font-family="&quot;Liberation Sans&quot;, sans-serif" font-size="10.6" font-weight="400" fill="#bdbdbd" text-anchor="middle" >K</text>
<line x1="1056.5" y1="181" x2="1056.5" y2="196" stroke="#4a4a4a" stroke-width="1" />
<text x="1084.5" y="192.8" font-family="&quot;Liberation Sans&quot;, sans-serif" font-size="10.6" font-weight="400" fill="#bdbdbd" text-anchor="middle" >L</text>
<line x1="1112.5" y1="181" x2="1112.5" y2="196" stroke="#4a4a4a" stroke-width="1" />
<text x="1140.5" y="192.8" font-family="&quot;Liberation Sans&quot;, sans-serif" font-size="10.6" font-weight="400" fill="#bdbdbd" text-anchor="middle" >M</text>
<line x1="1168.5" y1="181" x2="1168.5" y2="196" stroke="#4a4a4a" stroke-width="1" />
<text x="1196.0" y="192.8" font-family="&quot;Liberation Sans&quot;, sans-serif" font-size="10.6" font-weight="400" fill="#bdbdbd" text-anchor="middle" >N</text>
<line x1="1223.5" y1="181" x2="1223.5" y2="196" stroke="#4a4a4a" stroke-width="1" />
<path d="M42.5 195 L55.2 182.3 V195 Z" stroke="none" stroke-width="1" fill="#9e9e9e" />
<line x1="34" y1="196.5" x2="57" y2="196.5" stroke="#555" stroke-width="1" />
<line x1="389" y1="196.5" x2="501" y2="196.5" stroke="#3f8a56" stroke-width="1" />
<rect x="57" y="197" width="1179" height="401" rx="0" fill="#ffffff" />
<line x1="57" y1="243.5" x2="832" y2="243.5" stroke="#e4e4e4" stroke-width="1" />
<line x1="57" y1="259.5" x2="832" y2="259.5" stroke="#e4e4e4" stroke-width="1" />
<line x1="57" y1="275.5" x2="832" y2="275.5" stroke="#e4e4e4" stroke-width="1" />
<line x1="57" y1="291.5" x2="832" y2="291.5" stroke="#e4e4e4" stroke-width="1" />
<line x1="57" y1="340.5" x2="832" y2="340.5" stroke="#e4e4e4" stroke-width="1" />
<line x1="57" y1="356.5" x2="832" y2="356.5" stroke="#e4e4e4" stroke-width="1" />
<line x1="57" y1="372.5" x2="832" y2="372.5" stroke="#e4e4e4" stroke-width="1" />
<line x1="57" y1="388.5" x2="832" y2="388.5" stroke="#e4e4e4" stroke-width="1" />
<line x1="57" y1="437.5" x2="832" y2="437.5" stroke="#e4e4e4" stroke-width="1" />
<line x1="57" y1="453.5" x2="832" y2="453.5" stroke="#e4e4e4" stroke-width="1" />
<line x1="57" y1="469.5" x2="832" y2="469.5" stroke="#e4e4e4" stroke-width="1" />
<line x1="57" y1="485.5" x2="832" y2="485.5" stroke="#e4e4e4" stroke-width="1" />
<line x1="57" y1="534.5" x2="832" y2="534.5" stroke="#e4e4e4" stroke-width="1" />
<line x1="57" y1="550.5" x2="832" y2="550.5" stroke="#e4e4e4" stroke-width="1" />
<line x1="57" y1="566.5" x2="832" y2="566.5" stroke="#e4e4e4" stroke-width="1" />
<line x1="57" y1="582.5" x2="832" y2="582.5" stroke="#e4e4e4" stroke-width="1" />
<line x1="57" y1="598.5" x2="832" y2="598.5" stroke="#e4e4e4" stroke-width="1" />
<line x1="889" y1="227.5" x2="1236" y2="227.5" stroke="#e4e4e4" stroke-width="1" />
<line x1="889" y1="243.5" x2="1236" y2="243.5" stroke="#e4e4e4" stroke-width="1" />
<line x1="889" y1="259.5" x2="1236" y2="259.5" stroke="#e4e4e4" stroke-width="1" />
<line x1="889" y1="275.5" x2="1236" y2="275.5" stroke="#e4e4e4" stroke-width="1" />
<line x1="889" y1="291.5" x2="1236" y2="291.5" stroke="#e4e4e4" stroke-width="1" />
<line x1="889" y1="340.5" x2="1236" y2="340.5" stroke="#e4e4e4" stroke-width="1" />
<line x1="889" y1="356.5" x2="1236" y2="356.5" stroke="#e4e4e4" stroke-width="1" />
<line x1="889" y1="372.5" x2="1236" y2="372.5" stroke="#e4e4e4" stroke-width="1" />
<line x1="889" y1="388.5" x2="1236" y2="388.5" stroke="#e4e4e4" stroke-width="1" />
<line x1="889" y1="437.5" x2="1236" y2="437.5" stroke="#e4e4e4" stroke-width="1" />
<line x1="889" y1="453.5" x2="1236" y2="453.5" stroke="#e4e4e4" stroke-width="1" />
<line x1="889" y1="469.5" x2="1236" y2="469.5" stroke="#e4e4e4" stroke-width="1" />
<line x1="889" y1="485.5" x2="1236" y2="485.5" stroke="#e4e4e4" stroke-width="1" />
<line x1="889" y1="534.5" x2="1236" y2="534.5" stroke="#e4e4e4" stroke-width="1" />
<line x1="889" y1="550.5" x2="1236" y2="550.5" stroke="#e4e4e4" stroke-width="1" />
<line x1="889" y1="566.5" x2="1236" y2="566.5" stroke="#e4e4e4" stroke-width="1" />
<line x1="889" y1="582.5" x2="1236" y2="582.5" stroke="#e4e4e4" stroke-width="1" />
<line x1="889" y1="598.5" x2="1236" y2="598.5" stroke="#e4e4e4" stroke-width="1" />
<line x1="278.5" y1="228" x2="278.5" y2="598" stroke="#e4e4e4" stroke-width="1" />
<line x1="389.5" y1="228" x2="389.5" y2="598" stroke="#e4e4e4" stroke-width="1" />
<line x1="500.5" y1="228" x2="500.5" y2="598" stroke="#e4e4e4" stroke-width="1" />
<line x1="611.5" y1="228" x2="611.5" y2="598" stroke="#e4e4e4" stroke-width="1" />
<line x1="722.5" y1="228" x2="722.5" y2="598" stroke="#e4e4e4" stroke-width="1" />
<line x1="944.5" y1="228" x2="944.5" y2="598" stroke="#e4e4e4" stroke-width="1" />
<line x1="1000.5" y1="228" x2="1000.5" y2="598" stroke="#e4e4e4" stroke-width="1" />
<line x1="1056.5" y1="228" x2="1056.5" y2="598" stroke="#e4e4e4" stroke-width="1" />
<line x1="1112.5" y1="228" x2="1112.5" y2="598" stroke="#e4e4e4" stroke-width="1" />
<line x1="1168.5" y1="228" x2="1168.5" y2="598" stroke="#e4e4e4" stroke-width="1" />
<line x1="1223.5" y1="228" x2="1223.5" y2="598" stroke="#e4e4e4" stroke-width="1" />
<rect x="57" y="197" width="775" height="30" rx="0" fill="#bdd7ee" />
<rect x="889" y="197" width="347" height="31" rx="0" fill="#bdd7ee" />
<rect x="57" y="308" width="775" height="16" rx="0" fill="#ffe699" />
<rect x="889" y="309" width="347" height="15" rx="0" fill="#ffe699" />
<rect x="57" y="404" width="775" height="17" rx="0" fill="#ffe699" />
<rect x="889" y="405" width="347" height="16" rx="0" fill="#ffe699" />
<rect x="57" y="501" width="775" height="16" rx="0" fill="#ffe699" />
<rect x="889" y="502" width="347" height="15" rx="0" fill="#ffe699" />
<rect x="57" y="228" width="110" height="15" rx="0" fill="#f8cbad" />
<rect x="57" y="325" width="110" height="15" rx="0" fill="#f8cbad" />
<rect x="57" y="422" width="110" height="15" rx="0" fill="#f8cbad" />
<rect x="57" y="518" width="110" height="16" rx="0" fill="#f8cbad" />
<line x1="167.5" y1="197" x2="167.5" y2="227" stroke="#8497b0" stroke-width="1" />
<line x1="278.5" y1="197" x2="278.5" y2="227" stroke="#8497b0" stroke-width="1" />
<line x1="389.5" y1="197" x2="389.5" y2="227" stroke="#8497b0" stroke-width="1" />
<line x1="500.5" y1="197" x2="500.5" y2="227" stroke="#8497b0" stroke-width="1" />
<line x1="611.5" y1="197" x2="611.5" y2="227" stroke="#8497b0" stroke-width="1" />
<line x1="722.5" y1="197" x2="722.5" y2="227" stroke="#8497b0" stroke-width="1" />
<line x1="57" y1="227.5" x2="832" y2="227.5" stroke="#7f8a96" stroke-width="1" />
<line x1="167.5" y1="197" x2="167.5" y2="598" stroke="#707070" stroke-width="1" />
<line x1="832.5" y1="197" x2="832.5" y2="598" stroke="#707070" stroke-width="1" />
<line x1="57" y1="308.5" x2="832" y2="308.5" stroke="#9a9a9a" stroke-width="1" />
<line x1="57" y1="324.5" x2="832" y2="324.5" stroke="#8c8378" stroke-width="1" />
<line x1="57" y1="404.5" x2="832" y2="404.5" stroke="#9a9a9a" stroke-width="1" />
<line x1="57" y1="421.5" x2="832" y2="421.5" stroke="#8c8378" stroke-width="1" />
<line x1="57" y1="501.5" x2="832" y2="501.5" stroke="#9a9a9a" stroke-width="1" />
<line x1="57" y1="517.5" x2="832" y2="517.5" stroke="#8c8378" stroke-width="1" />
<text x="112.0" y="216.8" font-family="&quot;Liberation Serif&quot;, serif" font-size="12.6" font-weight="700" fill="#000" text-anchor="middle" >Mes</text>
<text x="223.0" y="216.8" font-family="&quot;Liberation Serif&quot;, serif" font-size="12.6" font-weight="700" fill="#000" text-anchor="middle" >Empleado</text>
<text x="334.0" y="209" font-family="&quot;Liberation Serif&quot;, serif" font-size="12.6" font-weight="700" fill="#000" text-anchor="middle" >Número de clientes</text>
<text x="334.0" y="223.6" font-family="&quot;Liberation Serif&quot;, serif" font-size="12.6" font-weight="700" fill="#000" text-anchor="middle" >(total)</text>
<text x="445.0" y="216.8" font-family="&quot;Liberation Serif&quot;, serif" font-size="12.6" font-weight="700" fill="#000" text-anchor="middle" >Ventas (unidades)</text>
<text x="556.0" y="216.8" font-family="&quot;Liberation Serif&quot;, serif" font-size="12.6" font-weight="700" fill="#000" text-anchor="middle" >Importe de ventas</text>
<text x="667.0" y="216.8" font-family="&quot;Liberation Serif&quot;, serif" font-size="12.6" font-weight="700" fill="#000" text-anchor="middle" >KPI (plan)</text>
<text x="777.5" y="209" font-family="&quot;Liberation Serif&quot;, serif" font-size="12.6" font-weight="700" fill="#000" text-anchor="middle" >KPI (porcentaje de</text>
<text x="777.5" y="223.6" font-family="&quot;Liberation Serif&quot;, serif" font-size="12.6" font-weight="700" fill="#000" text-anchor="middle" >cumplimiento)</text>
<text x="58.1" y="240.1" font-family="&quot;Liberation Serif&quot;, serif" font-size="12.6" font-weight="700" fill="#000" text-anchor="start" >Junio</text>
<text x="168.9" y="240.1" font-family="&quot;Liberation Serif&quot;, serif" font-size="12.75" font-weight="400" fill="#000" text-anchor="start" >Laura Martínez</text>
<text x="387.3" y="240.1" font-family="&quot;Liberation Serif&quot;, serif" font-size="12.75" font-weight="400" fill="#000" text-anchor="end" >154</text>
<text x="498.3" y="240.1" font-family="&quot;Liberation Serif&quot;, serif" font-size="12.75" font-weight="400" fill="#000" text-anchor="end" >16</text>
<text x="609.3" y="240.1" font-family="&quot;Liberation Serif&quot;, serif" font-size="12.75" font-weight="400" fill="#000" text-anchor="end" >1.560,00 €</text>
<text x="720.3" y="240.1" font-family="&quot;Liberation Serif&quot;, serif" font-size="12.75" font-weight="400" fill="#000" text-anchor="end" >2.500,00 €</text>
<text x="168.9" y="256.24" font-family="&quot;Liberation Serif&quot;, serif" font-size="12.75" font-weight="400" fill="#000" text-anchor="start" >Carlos Gómez</text>
<text x="387.3" y="256.24" font-family="&quot;Liberation Serif&quot;, serif" font-size="12.75" font-weight="400" fill="#000" text-anchor="end" >89</text>
<text x="498.3" y="256.24" font-family="&quot;Liberation Serif&quot;, serif" font-size="12.75" font-weight="400" fill="#000" text-anchor="end" >7</text>
<text x="609.3" y="256.24" font-family="&quot;Liberation Serif&quot;, serif" font-size="12.75" font-weight="400" fill="#000" text-anchor="end" >459,00 €</text>
<text x="720.3" y="256.24" font-family="&quot;Liberation Serif&quot;, serif" font-size="12.75" font-weight="400" fill="#000" text-anchor="end" >800,00 €</text>
<text x="168.9" y="272.38" font-family="&quot;Liberation Serif&quot;, serif" font-size="12.75" font-weight="400" fill="#000" text-anchor="start" >Ana Rodríguez</text>
<text x="387.3" y="272.38" font-family="&quot;Liberation Serif&quot;, serif" font-size="12.75" font-weight="400" fill="#000" text-anchor="end" >78</text>
<text x="498.3" y="272.38" font-family="&quot;Liberation Serif&quot;, serif" font-size="12.75" font-weight="400" fill="#000" text-anchor="end" >6</text>
<text x="609.3" y="272.38" font-family="&quot;Liberation Serif&quot;, serif" font-size="12.75" font-weight="400" fill="#000" text-anchor="end" >358,00 €</text>
<text x="720.3" y="272.38" font-family="&quot;Liberation Serif&quot;, serif" font-size="12.75" font-weight="400" fill="#000" text-anchor="end" >600,00 €</text>
<text x="168.9" y="288.52" font-family="&quot;Liberation Serif&quot;, serif" font-size="12.75" font-weight="400" fill="#000" text-anchor="start" >Javier López</text>
<text x="387.3" y="288.52" font-family="&quot;Liberation Serif&quot;, serif" font-size="12.75" font-weight="400" fill="#000" text-anchor="end" >115</text>
<text x="498.3" y="288.52" font-family="&quot;Liberation Serif&quot;, serif" font-size="12.75" font-weight="400" fill="#000" text-anchor="end" >11</text>
<text x="609.3" y="288.52" font-family="&quot;Liberation Serif&quot;, serif" font-size="12.75" font-weight="400" fill="#000" text-anchor="end" >1.002,00 €</text>
<text x="720.3" y="288.52" font-family="&quot;Liberation Serif&quot;, serif" font-size="12.75" font-weight="400" fill="#000" text-anchor="end" >2.000,00 €</text>
<text x="168.9" y="304.66" font-family="&quot;Liberation Serif&quot;, serif" font-size="12.75" font-weight="400" fill="#000" text-anchor="start" >María Fernández</text>
<text x="387.3" y="304.66" font-family="&quot;Liberation Serif&quot;, serif" font-size="12.75" font-weight="400" fill="#000" text-anchor="end" >59</text>
<text x="498.3" y="304.66" font-family="&quot;Liberation Serif&quot;, serif" font-size="12.75" font-weight="400" fill="#000" text-anchor="end" >5</text>
<text x="609.3" y="304.66" font-family="&quot;Liberation Serif&quot;, serif" font-size="12.75" font-weight="400" fill="#000" text-anchor="end" >300,00 €</text>
<text x="720.3" y="304.66" font-family="&quot;Liberation Serif&quot;, serif" font-size="12.75" font-weight="400" fill="#000" text-anchor="end" >500,00 €</text>
<text x="58.1" y="336.94" font-family="&quot;Liberation Serif&quot;, serif" font-size="12.6" font-weight="700" fill="#000" text-anchor="start" >Julio</text>
<text x="168.9" y="336.94" font-family="&quot;Liberation Serif&quot;, serif" font-size="12.75" font-weight="400" fill="#000" text-anchor="start" >Laura Martínez</text>
<text x="498.3" y="336.94" font-family="&quot;Liberation Serif&quot;, serif" font-size="12.75" font-weight="400" fill="#000" text-anchor="end" >11</text>
<text x="609.3" y="336.94" font-family="&quot;Liberation Serif&quot;, serif" font-size="12.75" font-weight="400" fill="#000" text-anchor="end" >1.200,00 €</text>
<text x="168.9" y="353.08" font-family="&quot;Liberation Serif&quot;, serif" font-size="12.75" font-weight="400" fill="#000" text-anchor="start" >Carlos Gómez</text>
<text x="498.3" y="353.08" font-family="&quot;Liberation Serif&quot;, serif" font-size="12.75" font-weight="400" fill="#000" text-anchor="end" >4</text>
<text x="609.3" y="353.08" font-family="&quot;Liberation Serif&quot;, serif" font-size="12.75" font-weight="400" fill="#000" text-anchor="end" >259,00 €</text>
<text x="168.9" y="369.21999999999997" font-family="&quot;Liberation Serif&quot;, serif" font-size="12.75" font-weight="400" fill="#000" text-anchor="start" >Ana Rodríguez</text>
<text x="498.3" y="369.21999999999997" font-family="&quot;Liberation Serif&quot;, serif" font-size="12.75" font-weight="400" fill="#000" text-anchor="end" >8</text>
<text x="609.3" y="369.21999999999997" font-family="&quot;Liberation Serif&quot;, serif" font-size="12.75" font-weight="400" fill="#000" text-anchor="end" >598,00 €</text>
<text x="168.9" y="385.35999999999996" font-family="&quot;Liberation Serif&quot;, serif" font-size="12.75" font-weight="400" fill="#000" text-anchor="start" >Javier López</text>
<text x="498.3" y="385.35999999999996" font-family="&quot;Liberation Serif&quot;, serif" font-size="12.75" font-weight="400" fill="#000" text-anchor="end" >10</text>
<text x="609.3" y="385.35999999999996" font-family="&quot;Liberation Serif&quot;, serif" font-size="12.75" font-weight="400" fill="#000" text-anchor="end" >1.025,00 €</text>
<text x="168.9" y="401.5" font-family="&quot;Liberation Serif&quot;, serif" font-size="12.75" font-weight="400" fill="#000" text-anchor="start" >María Fernández</text>
<text x="498.3" y="401.5" font-family="&quot;Liberation Serif&quot;, serif" font-size="12.75" font-weight="400" fill="#000" text-anchor="end" >6</text>
<text x="609.3" y="401.5" font-family="&quot;Liberation Serif&quot;, serif" font-size="12.75" font-weight="400" fill="#000" text-anchor="end" >368,00 €</text>
<text x="58.1" y="433.78000000000003" font-family="&quot;Liberation Serif&quot;, serif" font-size="12.6" font-weight="700" fill="#000" text-anchor="start" >Agosto</text>
<text x="168.9" y="433.78000000000003" font-family="&quot;Liberation Serif&quot;, serif" font-size="12.75" font-weight="400" fill="#000" text-anchor="start" >Laura Martínez</text>
<text x="498.3" y="433.78000000000003" font-family="&quot;Liberation Serif&quot;, serif" font-size="12.75" font-weight="400" fill="#000" text-anchor="end" >10</text>
<text x="609.3" y="433.78000000000003" font-family="&quot;Liberation Serif&quot;, serif" font-size="12.75" font-weight="400" fill="#000" text-anchor="end" >998,00 €</text>
<text x="168.9" y="449.92" font-family="&quot;Liberation Serif&quot;, serif" font-size="12.75" font-weight="400" fill="#000" text-anchor="start" >Carlos Gómez</text>
<text x="498.3" y="449.92" font-family="&quot;Liberation Serif&quot;, serif" font-size="12.75" font-weight="400" fill="#000" text-anchor="end" >5</text>
<text x="609.3" y="449.92" font-family="&quot;Liberation Serif&quot;, serif" font-size="12.75" font-weight="400" fill="#000" text-anchor="end" >205,00 €</text>
<text x="168.9" y="466.06" font-family="&quot;Liberation Serif&quot;, serif" font-size="12.75" font-weight="400" fill="#000" text-anchor="start" >Ana Rodríguez</text>
<text x="498.3" y="466.06" font-family="&quot;Liberation Serif&quot;, serif" font-size="12.75" font-weight="400" fill="#000" text-anchor="end" >14</text>
<text x="609.3" y="466.06" font-family="&quot;Liberation Serif&quot;, serif" font-size="12.75" font-weight="400" fill="#000" text-anchor="end" >140,00 €</text>
<text x="168.9" y="482.2" font-family="&quot;Liberation Serif&quot;, serif" font-size="12.75" font-weight="400" fill="#000" text-anchor="start" >Javier López</text>
<text x="498.3" y="482.2" font-family="&quot;Liberation Serif&quot;, serif" font-size="12.75" font-weight="400" fill="#000" text-anchor="end" >2</text>
<text x="609.3" y="482.2" font-family="&quot;Liberation Serif&quot;, serif" font-size="12.75" font-weight="400" fill="#000" text-anchor="end" >100,00 €</text>
<text x="168.9" y="498.34" font-family="&quot;Liberation Serif&quot;, serif" font-size="12.75" font-weight="400" fill="#000" text-anchor="start" >María Fernández</text>
<text x="498.3" y="498.34" font-family="&quot;Liberation Serif&quot;, serif" font-size="12.75" font-weight="400" fill="#000" text-anchor="end" >8</text>
<text x="609.3" y="498.34" font-family="&quot;Liberation Serif&quot;, serif" font-size="12.75" font-weight="400" fill="#000" text-anchor="end" >602,00 €</text>
<text x="58.1" y="530.62" font-family="&quot;Liberation Serif&quot;, serif" font-size="12.6" font-weight="700" fill="#000" text-anchor="start" >Septiembre</text>
<text x="168.9" y="530.62" font-family="&quot;Liberation Serif&quot;, serif" font-size="12.75" font-weight="400" fill="#000" text-anchor="start" >Laura Martínez</text>
<text x="498.3" y="530.62" font-family="&quot;Liberation Serif&quot;, serif" font-size="12.75" font-weight="400" fill="#000" text-anchor="end" >9</text>
<text x="609.3" y="530.62" font-family="&quot;Liberation Serif&quot;, serif" font-size="12.75" font-weight="400" fill="#000" text-anchor="end" >6.015,00 €</text>
<text x="168.9" y="546.7600000000001" font-family="&quot;Liberation Serif&quot;, serif" font-size="12.75" font-weight="400" fill="#000" text-anchor="start" >Carlos Gómez</text>
<text x="498.3" y="546.7600000000001" font-family="&quot;Liberation Serif&quot;, serif" font-size="12.75" font-weight="400" fill="#000" text-anchor="end" >5</text>
<text x="609.3" y="546.7600000000001" font-family="&quot;Liberation Serif&quot;, serif" font-size="12.75" font-weight="400" fill="#000" text-anchor="end" >320,00 €</text>
<text x="168.9" y="562.9000000000001" font-family="&quot;Liberation Serif&quot;, serif" font-size="12.75" font-weight="400" fill="#000" text-anchor="start" >Ana Rodríguez</text>
<text x="498.3" y="562.9000000000001" font-family="&quot;Liberation Serif&quot;, serif" font-size="12.75" font-weight="400" fill="#000" text-anchor="end" >10</text>
<text x="609.3" y="562.9000000000001" font-family="&quot;Liberation Serif&quot;, serif" font-size="12.75" font-weight="400" fill="#000" text-anchor="end" >887,00 €</text>
<text x="168.9" y="579.0400000000001" font-family="&quot;Liberation Serif&quot;, serif" font-size="12.75" font-weight="400" fill="#000" text-anchor="start" >Javier López</text>
<text x="498.3" y="579.0400000000001" font-family="&quot;Liberation Serif&quot;, serif" font-size="12.75" font-weight="400" fill="#000" text-anchor="end" >4</text>
<text x="609.3" y="579.0400000000001" font-family="&quot;Liberation Serif&quot;, serif" font-size="12.75" font-weight="400" fill="#000" text-anchor="end" >250,00 €</text>
<text x="168.9" y="595.1800000000001" font-family="&quot;Liberation Serif&quot;, serif" font-size="12.75" font-weight="400" fill="#000" text-anchor="start" >María Fernández</text>
<text x="498.3" y="595.1800000000001" font-family="&quot;Liberation Serif&quot;, serif" font-size="12.75" font-weight="400" fill="#000" text-anchor="end" >10</text>
<text x="609.3" y="595.1800000000001" font-family="&quot;Liberation Serif&quot;, serif" font-size="12.75" font-weight="400" fill="#000" text-anchor="end" >1.005,00 €</text>
<text x="166" y="320.8" font-family="&quot;Liberation Serif&quot;, serif" font-size="12.6" font-weight="700" fill="#000" text-anchor="end" >total, mes</text>
<text x="609.3" y="320.8" font-family="&quot;Liberation Serif&quot;, serif" font-size="12.6" font-weight="700" fill="#000" text-anchor="end" >3.679,00 €</text>
<text x="720.3" y="320.8" font-family="&quot;Liberation Serif&quot;, serif" font-size="12.6" font-weight="700" fill="#000" text-anchor="end" >6.400,00 €</text>
<text x="166" y="417.64000000000004" font-family="&quot;Liberation Serif&quot;, serif" font-size="12.6" font-weight="700" fill="#000" text-anchor="end" >total, mes</text>
<text x="609.3" y="417.64000000000004" font-family="&quot;Liberation Serif&quot;, serif" font-size="12.6" font-weight="700" fill="#000" text-anchor="end" >3.450,00 €</text>
<text x="166" y="514.48" font-family="&quot;Liberation Serif&quot;, serif" font-size="12.6" font-weight="700" fill="#000" text-anchor="end" >total, mes</text>
<rect x="390" y="405" width="110" height="16" rx="0" fill="none" stroke="#2f6b44" stroke-width="1.5" />
<rect x="498.5" y="419.5" width="4" height="4" rx="0" fill="#2f6b44" stroke="#fff" stroke-width="0.8" />
<rect x="34" y="197" width="22" height="401" rx="0" fill="#1f1f1f" />
<line x1="34" y1="227.5" x2="56" y2="227.5" stroke="#505050" stroke-width="1" />
<text x="45.3" y="224.1" font-family="&quot;Liberation Sans&quot;, sans-serif" font-size="10.7" font-weight="400" fill="#c4c4c4" text-anchor="middle" >1</text>
<line x1="34" y1="243.5" x2="56" y2="243.5" stroke="#505050" stroke-width="1" />
<text x="45.3" y="240.1" font-family="&quot;Liberation Sans&quot;, sans-serif" font-size="10.7" font-weight="400" fill="#c4c4c4" text-anchor="middle" >2</text>
<line x1="34" y1="259.5" x2="56" y2="259.5" stroke="#505050" stroke-width="1" />
<text x="45.3" y="256.1" font-family="&quot;Liberation Sans&quot;, sans-serif" font-size="10.7" font-weight="400" fill="#c4c4c4" text-anchor="middle" >3</text>
<line x1="34" y1="275.5" x2="56" y2="275.5" stroke="#505050" stroke-width="1" />
<text x="45.3" y="272.1" font-family="&quot;Liberation Sans&quot;, sans-serif" font-size="10.7" font-weight="400" fill="#c4c4c4" text-anchor="middle" >4</text>
<line x1="34" y1="291.5" x2="56" y2="291.5" stroke="#505050" stroke-width="1" />
<text x="45.3" y="288.1" font-family="&quot;Liberation Sans&quot;, sans-serif" font-size="10.7" font-weight="400" fill="#c4c4c4" text-anchor="middle" >5</text>
<line x1="34" y1="308.5" x2="56" y2="308.5" stroke="#505050" stroke-width="1" />
<text x="45.3" y="305.1" font-family="&quot;Liberation Sans&quot;, sans-serif" font-size="10.7" font-weight="400" fill="#c4c4c4" text-anchor="middle" >6</text>
<line x1="34" y1="324.5" x2="56" y2="324.5" stroke="#505050" stroke-width="1" />
<text x="45.3" y="321.1" font-family="&quot;Liberation Sans&quot;, sans-serif" font-size="10.7" font-weight="400" fill="#c4c4c4" text-anchor="middle" >7</text>
<line x1="34" y1="340.5" x2="56" y2="340.5" stroke="#505050" stroke-width="1" />
<text x="45.3" y="337.1" font-family="&quot;Liberation Sans&quot;, sans-serif" font-size="10.7" font-weight="400" fill="#c4c4c4" text-anchor="middle" >8</text>
<line x1="34" y1="356.5" x2="56" y2="356.5" stroke="#505050" stroke-width="1" />
<text x="45.3" y="353.1" font-family="&quot;Liberation Sans&quot;, sans-serif" font-size="10.7" font-weight="400" fill="#c4c4c4" text-anchor="middle" >9</text>
<line x1="34" y1="372.5" x2="56" y2="372.5" stroke="#505050" stroke-width="1" />
<text x="45.3" y="369.1" font-family="&quot;Liberation Sans&quot;, sans-serif" font-size="10.7" font-weight="400" fill="#c4c4c4" text-anchor="middle" >10</text>
<line x1="34" y1="388.5" x2="56" y2="388.5" stroke="#505050" stroke-width="1" />
<text x="45.3" y="385.1" font-family="&quot;Liberation Sans&quot;, sans-serif" font-size="10.7" font-weight="400" fill="#c4c4c4" text-anchor="middle" >11</text>
<line x1="34" y1="404.5" x2="56" y2="404.5" stroke="#505050" stroke-width="1" />
<text x="45.3" y="401.1" font-family="&quot;Liberation Sans&quot;, sans-serif" font-size="10.7" font-weight="400" fill="#c4c4c4" text-anchor="middle" >12</text>
<rect x="34" y="405" width="22" height="16" rx="0" fill="#555555" />
<line x1="55.5" y1="405" x2="55.5" y2="421" stroke="#3f8a56" stroke-width="1" />
<line x1="34" y1="421.5" x2="56" y2="421.5" stroke="#505050" stroke-width="1" />
<text x="45.3" y="418.1" font-family="&quot;Liberation Sans&quot;, sans-serif" font-size="10.7" font-weight="400" fill="#c4c4c4" text-anchor="middle" >13</text>
<line x1="34" y1="437.5" x2="56" y2="437.5" stroke="#505050" stroke-width="1" />
<text x="45.3" y="434.1" font-family="&quot;Liberation Sans&quot;, sans-serif" font-size="10.7" font-weight="400" fill="#c4c4c4" text-anchor="middle" >14</text>
<line x1="34" y1="453.5" x2="56" y2="453.5" stroke="#505050" stroke-width="1" />
<text x="45.3" y="450.1" font-family="&quot;Liberation Sans&quot;, sans-serif" font-size="10.7" font-weight="400" fill="#c4c4c4" text-anchor="middle" >15</text>
<line x1="34" y1="469.5" x2="56" y2="469.5" stroke="#505050" stroke-width="1" />
<text x="45.3" y="466.1" font-family="&quot;Liberation Sans&quot;, sans-serif" font-size="10.7" font-weight="400" fill="#c4c4c4" text-anchor="middle" >16</text>
<line x1="34" y1="485.5" x2="56" y2="485.5" stroke="#505050" stroke-width="1" />
<text x="45.3" y="482.1" font-family="&quot;Liberation Sans&quot;, sans-serif" font-size="10.7" font-weight="400" fill="#c4c4c4" text-anchor="middle" >17</text>
<line x1="34" y1="501.5" x2="56" y2="501.5" stroke="#505050" stroke-width="1" />
<text x="45.3" y="498.1" font-family="&quot;Liberation Sans&quot;, sans-serif" font-size="10.7" font-weight="400" fill="#c4c4c4" text-anchor="middle" >18</text>
<line x1="34" y1="517.5" x2="56" y2="517.5" stroke="#505050" stroke-width="1" />
<text x="45.3" y="514.1" font-family="&quot;Liberation Sans&quot;, sans-serif" font-size="10.7" font-weight="400" fill="#c4c4c4" text-anchor="middle" >19</text>
<line x1="34" y1="534.5" x2="56" y2="534.5" stroke="#505050" stroke-width="1" />
<text x="45.3" y="531.1" font-family="&quot;Liberation Sans&quot;, sans-serif" font-size="10.7" font-weight="400" fill="#c4c4c4" text-anchor="middle" >20</text>
<line x1="34" y1="550.5" x2="56" y2="550.5" stroke="#505050" stroke-width="1" />
<text x="45.3" y="547.1" font-family="&quot;Liberation Sans&quot;, sans-serif" font-size="10.7" font-weight="400" fill="#c4c4c4" text-anchor="middle" >21</text>
<line x1="34" y1="566.5" x2="56" y2="566.5" stroke="#505050" stroke-width="1" />
<text x="45.3" y="563.1" font-family="&quot;Liberation Sans&quot;, sans-serif" font-size="10.7" font-weight="400" fill="#c4c4c4" text-anchor="middle" >22</text>
<line x1="34" y1="582.5" x2="56" y2="582.5" stroke="#505050" stroke-width="1" />
<text x="45.3" y="579.1" font-family="&quot;Liberation Sans&quot;, sans-serif" font-size="10.7" font-weight="400" fill="#c4c4c4" text-anchor="middle" >23</text>
<line x1="34" y1="598.5" x2="56" y2="598.5" stroke="#505050" stroke-width="1" />
<text x="45.3" y="595.1" font-family="&quot;Liberation Sans&quot;, sans-serif" font-size="10.7" font-weight="400" fill="#c4c4c4" text-anchor="middle" >24</text>
<line x1="56.5" y1="181" x2="56.5" y2="598" stroke="#5a5a5a" stroke-width="1" />
<rect x="1236" y="180" width="11.200000000000045" height="418" rx="0" fill="#1f1f1f" />
<rect x="1236.2" y="181.5" width="10.5" height="11.5" rx="0" fill="#3d3d3d" stroke="#555" stroke-width="0.8" />
<path d="M1238.8 190 L1241.45 186.8 L1244.1 190 Z" stroke="none" stroke-width="1" fill="#e8e8e8" />
<rect x="1236.3" y="194.3" width="10.4" height="374" rx="0" fill="#404040" stroke="#545454" stroke-width="0.8" />
<line x1="1239" y1="376.3" x2="1243.4" y2="376.3" stroke="#cfcfcf" stroke-width="1" />
<line x1="1239" y1="378.5" x2="1243.4" y2="378.5" stroke="#cfcfcf" stroke-width="1" />
<line x1="1239" y1="380.7" x2="1243.4" y2="380.7" stroke="#cfcfcf" stroke-width="1" />
<line x1="1239" y1="382.90000000000003" x2="1243.4" y2="382.90000000000003" stroke="#cfcfcf" stroke-width="1" />
<line x1="1239" y1="385.1" x2="1243.4" y2="385.1" stroke="#cfcfcf" stroke-width="1" />
<line x1="1239" y1="387.3" x2="1243.4" y2="387.3" stroke="#cfcfcf" stroke-width="1" />
<rect x="1236.2" y="586.3" width="10.5" height="10.7" rx="0" fill="#3d3d3d" stroke="#555" stroke-width="0.8" />
<path d="M1238.8 589.8 L1241.45 593 L1244.1 589.8 Z" stroke="none" stroke-width="1" fill="#e8e8e8" />
<rect x="35" y="598" width="1201" height="11.2" rx="0" fill="#404040" />
<rect x="35.3" y="598.5" width="10.7" height="10.3" rx="0" fill="#3d3d3d" stroke="#555" stroke-width="0.8" />
<path d="M42.5 601 L39.5 603.7 L42.5 606.4 Z" stroke="none" stroke-width="1" fill="#e8e8e8" />
<line x1="46.5" y1="598.3" x2="1236" y2="598.3" stroke="#555" stroke-width="0.8" />
<line x1="46.5" y1="608.8" x2="1236" y2="608.8" stroke="#555" stroke-width="0.8" />
<rect x="1222.8" y="598.5" width="11.7" height="10.3" rx="0" fill="#3d3d3d" stroke="#555" stroke-width="0.8" />
<path d="M1227 601 L1230 603.7 L1227 606.4 Z" stroke="none" stroke-width="1" fill="#e8e8e8" />
<line x1="629.0" y1="600.8" x2="629.0" y2="605.6" stroke="#cfcfcf" stroke-width="0.9" />
<line x1="630.9" y1="600.8" x2="630.9" y2="605.6" stroke="#cfcfcf" stroke-width="0.9" />
<line x1="632.8" y1="600.8" x2="632.8" y2="605.6" stroke="#cfcfcf" stroke-width="0.9" />
<line x1="634.7" y1="600.8" x2="634.7" y2="605.6" stroke="#cfcfcf" stroke-width="0.9" />
<line x1="636.6" y1="600.8" x2="636.6" y2="605.6" stroke="#cfcfcf" stroke-width="0.9" />
<line x1="638.5" y1="600.8" x2="638.5" y2="605.6" stroke="#cfcfcf" stroke-width="0.9" />
<rect x="1258.5" y="176" width="13.5" height="9.5" rx="1" fill="none" stroke="#d8d8d8" stroke-width="1.1" />
<path d="M1258.5 178.6 H1272 M1258.5 182.9 H1272 M1261.5 176 V185.5 M1269 176 V185.5" stroke="#d8d8d8" stroke-width="1" fill="none" />
<circle cx="1262.6" cy="209" r="4.4" fill="none" stroke="#a8a8a8" stroke-width="1"/>
<rect x="1263" y="209.5" width="8" height="8" rx="0.8" fill="#1f1f1f" stroke="#a8a8a8" stroke-width="1" />
<rect x="1259.4" y="234.2" width="12" height="11.5" rx="0" fill="none" stroke="#a8a8a8" stroke-width="1" />
<path d="M1259.6 245.2 L1265.3 239.8 L1271 245.2" stroke="#a8a8a8" stroke-width="1" fill="none" />
<circle cx="1267.5" cy="237" r="1.1" fill="#a8a8a8"/>
<rect x="1259.5" y="271.5" width="2.5" height="3.8" rx="0" fill="none" stroke="#a8a8a8" stroke-width="0.9" />
<rect x="1264" y="268.3" width="2.5" height="7" rx="0" fill="none" stroke="#a8a8a8" stroke-width="0.9" />
<rect x="1268.5" y="264.3" width="2.5" height="11" rx="0" fill="none" stroke="#a8a8a8" stroke-width="0.9" />
<path d="M1264.5 294.5 H1261.8 A2.5 2.5 0 0 0 1261.8 299.5 H1264.5 M1264.5 294.5 V305.3 M1268 294.5 V305.3 M1263.5 294.5 H1270.3" stroke="#a8a8a8" stroke-width="1" fill="none" />
<path d="M1261 331 L1265 322.8 L1269 331 M1262.3 328.2 H1267.7" stroke="#a8a8a8" stroke-width="1" fill="none" />
<path d="M1259.5 335 Q1265 331.5 1270.5 335" stroke="#a8a8a8" stroke-width="1" fill="none" />
<path d="M1267 360.5 H1259.5 V352 H1269.5 V355" stroke="#a8a8a8" stroke-width="1" fill="none" />
<path d="M1261.5 354.5 H1267 M1261.5 357 H1265" stroke="#a8a8a8" stroke-width="0.9" fill="none" />
<path d="M1265.5 357 H1272 L1269.5 360 V364.5 L1268 363.5 V360 Z" stroke="#a8a8a8" stroke-width="1" fill="none" />
<rect x="0" y="609.5" width="1280" height="28" rx="0" fill="#3c3c3c" />
<linearGradient id="strip" x1="0" y1="0" x2="1" y2="0"><stop offset="0" stop-color="#eef1f3"/><stop offset="0.12" stop-color="#e8ebee"/><stop offset="0.3" stop-color="#dde0e3"/><stop offset="0.7" stop-color="#dde0e3"/><stop offset="0.88" stop-color="#e8ebee"/><stop offset="1" stop-color="#eef1f3"/></linearGradient>
<rect x="0" y="637.5" width="1280" height="9.5" rx="0" fill="url(#strip)" />
<line x1="0" y1="637.8" x2="1280" y2="637.8" stroke="#2c2c2c" stroke-width="0.6" />
<path d="M0 631.5 A6 6 0 0 0 6 637.5 H0 Z" fill="#eef1f3"/>
<path d="M1280 631.5 A6 6 0 0 1 1274 637.5 H1280 Z" fill="#eef1f3"/>
<path d="M22 619 L16.2 624.3 L22 629.6" stroke="#8e8e8e" stroke-width="1.1" fill="none" stroke-linecap="round" stroke-linejoin="round"/>
<path d="M39 619 L44.8 624.3 L39 629.6" stroke="#8e8e8e" stroke-width="1.1" fill="none" stroke-linecap="round" stroke-linejoin="round"/>
<line x1="62.5" y1="609.5" x2="62.5" y2="637.5" stroke="#555" stroke-width="1" />
<path d="M80 618.3 V629.8 M74.2 624 H85.8" stroke="#d0d0d0" stroke-width="1.1" fill="none" />
<line x1="95" y1="618.9" x2="107.2" y2="618.9" stroke="#c0c0c0" stroke-width="1.1" />
<line x1="95" y1="622.5" x2="107.2" y2="622.5" stroke="#c0c0c0" stroke-width="1.1" />
<line x1="95" y1="626.1" x2="107.2" y2="626.1" stroke="#c0c0c0" stroke-width="1.1" />
<line x1="95" y1="629.6999999999999" x2="107.2" y2="629.6999999999999" stroke="#c0c0c0" stroke-width="1.1" />
<line x1="119.5" y1="609.5" x2="119.5" y2="637.5" stroke="#555" stroke-width="1" />
<rect x="120" y="610.7" width="44.6" height="26.8" rx="0" fill="#3f3f3f" />
<rect x="120" y="610.7" width="44.6" height="3.2" rx="0" fill="#3e8a5e" />
<text x="128.3" y="628.8" font-family="&quot;Liberation Sans&quot;, sans-serif" font-size="10.6" font-weight="700" fill="#f2f2f2" text-anchor="start" textLength="27" lengthAdjust="spacingAndGlyphs" >Tabla</text>
<rect x="164.6" y="610.7" width="94.4" height="26.8" rx="0" fill="#1f1f1f" />
<text x="177.5" y="628.8" font-family="&quot;Liberation Sans&quot;, sans-serif" font-size="10.4" font-weight="400" fill="#a8a8a8" text-anchor="start" textLength="69.2" lengthAdjust="spacingAndGlyphs" >Tabla dinámica</text>
<line x1="259.3" y1="609.5" x2="259.3" y2="637.5" stroke="#555" stroke-width="1" />
<line x1="1155.3" y1="623.9" x2="1166.8" y2="623.9" stroke="#cfcfcf" stroke-width="1.1" />
<text x="1171.7" y="627.9" font-family="&quot;Liberation Sans&quot;, sans-serif" font-size="10.5" font-weight="400" fill="#ececec" text-anchor="start" textLength="81" lengthAdjust="spacingAndGlyphs" >Ampliación 100%</text>
<path d="M1263 618.3 V629.8 M1257.2 624 H1268.8" stroke="#cfcfcf" stroke-width="1.1" fill="none" />
</svg>
</body></html>
